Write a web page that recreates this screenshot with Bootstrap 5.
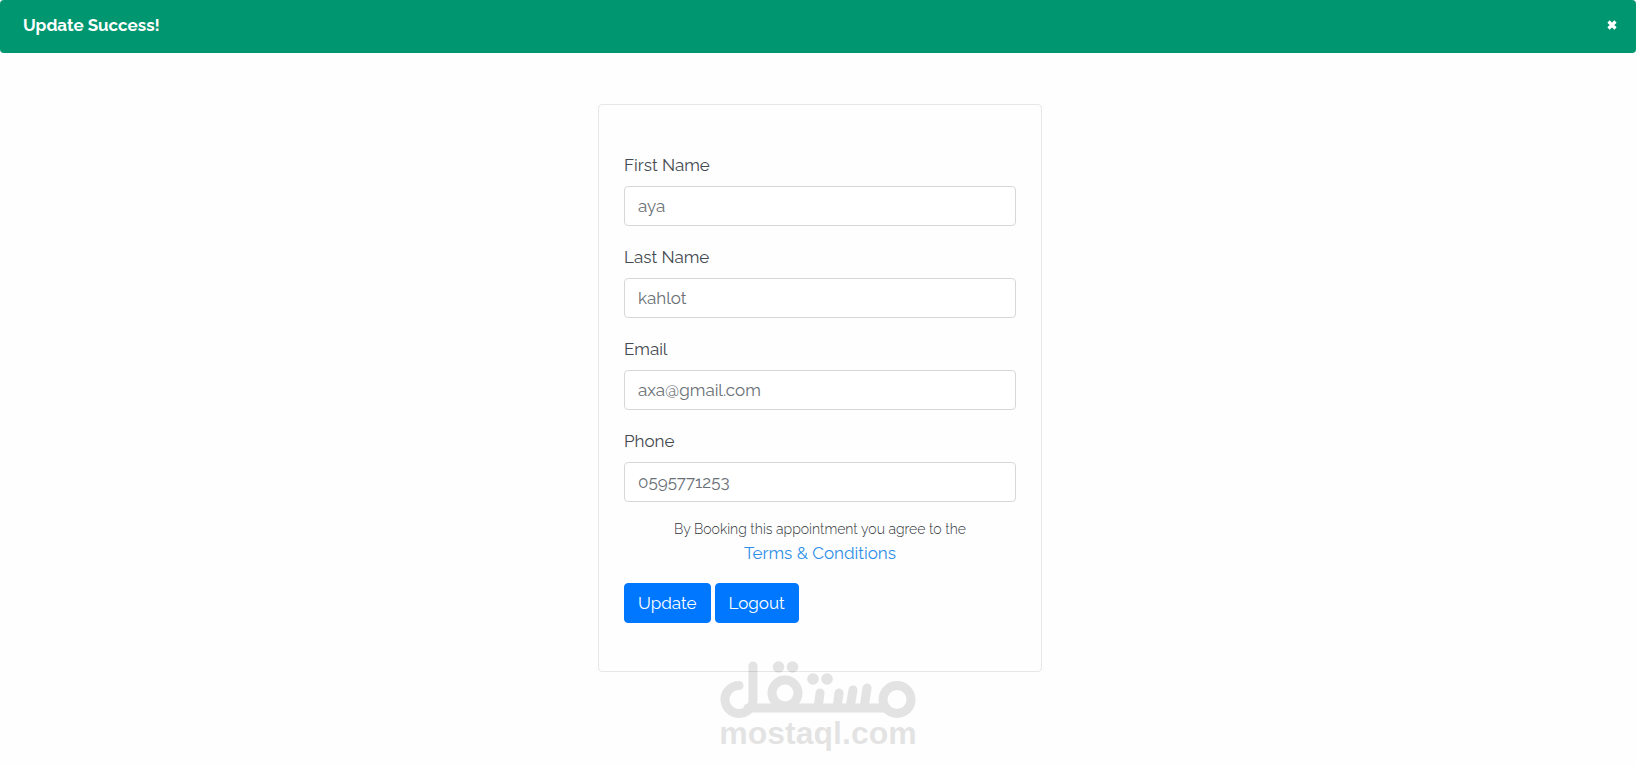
<!DOCTYPE html>
<html lang="en">
<head>
<meta charset="utf-8">
<meta name="viewport" content="width=device-width, initial-scale=1">
<title>Profile</title>
<link href="https://cdn.jsdelivr.net/npm/bootstrap@5.3.0/dist/css/bootstrap.min.css" rel="stylesheet">
<style>
  body { font-family: Raleway, Lato, sans-serif; font-size: 17px; line-height: 26px; color: #444a50; background: #fefefe; }
  .notice { background: #00966f; color: #fff; padding: 12px 18px 15px 23px; border-radius: 4px; font-weight: 700; }
  .notice-close { background: none; border: 0; padding: 0; width: 12px; line-height: 0; margin-top: 7px; }
  .page-body { padding: 51px 12px 0 16px; }
  .profile-card { max-width: 444px; padding: 47px 25px 48px; background: transparent; border: 1px solid #e6e6e6; border-radius: 4px; }
  .field { margin-bottom: 18px; }
  .field label { display: block; margin-bottom: 8px; }
  .field .form-control { height: 40px; padding: 6px 13px; font-size: 17px; line-height: 26px; color: #6a7076; background: #fff; border-color: #d5d8da; border-radius: 4px; }
  .terms { font-size: 14px; line-height: 24px; margin: -3px 0 17px; }
  .terms-note { font-weight: 300; color: #30353a; }
  .terms a { font-size: 17px; color: #2e8fe8; text-decoration: none; }
  .profile-card .btn { height: 40px; padding: 6px 13px; font-size: 17px; line-height: 26px; border: 1px solid #0077ff; background: #0077ff; border-radius: 4px; color: #fff; }
  .brand-mark { margin-top: -11px; color: #000; opacity: .1; pointer-events: none; }
  .brand-mark svg { display: block; }
  .brand-name { font: 700 32px/28px "Liberation Sans", Arial, sans-serif; padding-bottom: 8px; }
</style>
</head>
<body>
<div class="notice d-flex justify-content-between align-items-start" role="alert">
  <span>Update Success!</span>
  <button type="button" class="notice-close" aria-label="Close">
    <svg width="12" height="12" viewBox="0 0 12 12"><path d="M2.500 2.500l7 7M9.500 2.500l-7 7" stroke="#fff" stroke-width="3.200"/></svg>
  </button>
</div>

<main class="page-body">
  <form class="profile-card mx-auto">
    <div class="field">
      <label for="first">First Name</label>
      <input id="first" type="text" class="form-control" value="aya">
    </div>
    <div class="field">
      <label for="last">Last Name</label>
      <input id="last" type="text" class="form-control" value="kahlot">
    </div>
    <div class="field">
      <label for="email">Email</label>
      <input id="email" type="email" class="form-control" value="axa@gmail.com">
    </div>
    <div class="field">
      <label for="phone">Phone</label>
      <input id="phone" type="tel" class="form-control" value="0595771253">
    </div>
    <p class="terms text-center"><span class="terms-note">By Booking this appointment you agree to the</span><br><a href="#">Terms &amp; Conditions</a></p>
    <div class="d-flex gap-1">
      <button type="button" class="btn">Update</button>
      <button type="button" class="btn">Logout</button>
    </div>
  </form>
</main>

<footer class="brand-mark d-flex flex-column align-items-center">
  <svg width="196" height="58" viewBox="20 11 196 58" fill="none" stroke="currentColor" stroke-width="9" stroke-linecap="round" stroke-linejoin="round" role="img" aria-label="mostaql">
    <path d="M39 35.500a14 14 0 1 0 8 25.500Q53 57 53 50V16M48 58H186M120 43l-2 15M139 43l-2 15M153 40l-3 18M167 38l-3 20"/>
    <circle cx="85" cy="43" r="13"/>
    <circle cx="197" cy="49.500" r="14"/>
    <g fill="currentColor" stroke="none">
      <circle cx="78.500" cy="17" r="5.800"/><circle cx="92.500" cy="17" r="5.800"/>
      <circle cx="113" cy="29" r="5.800"/><circle cx="127" cy="29" r="5.800"/>
    </g>
  </svg>
  <div class="brand-name">mostaql.com</div>
</footer>
<script src="https://cdn.jsdelivr.net/npm/bootstrap@5.3.0/dist/js/bootstrap.bundle.min.js"></script>
</body>
</html>
